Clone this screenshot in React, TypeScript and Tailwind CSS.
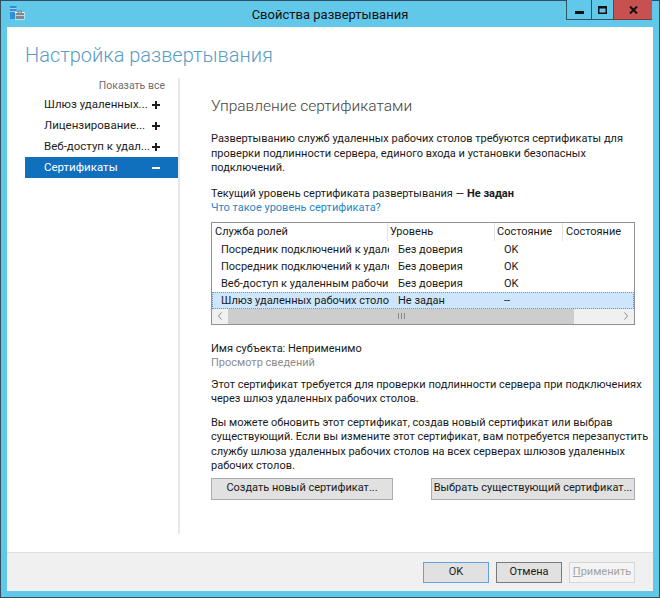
import React from "react";

function AppIcon() {
  return (
    <svg className="absolute left-[8px] top-[4px]" width="16" height="16" viewBox="0 0 16 16">
      <rect x="1" y="1" width="6.5" height="13" fill="#2f8fd8" />
      <rect x="1" y="3" width="6.5" height="1" fill="#9fd3f5" />
      <rect x="1" y="6" width="6.5" height="1" fill="#9fd3f5" />
      <rect x="6" y="7" width="9.5" height="7.5" fill="#ffffff" />
      <rect x="6.5" y="8" width="8.5" height="6" fill="#7c8894" />
      <rect x="9" y="6" width="3.5" height="2" fill="none" stroke="#7c8894" strokeWidth="1" />
      <rect x="6.5" y="10" width="8.5" height="1" fill="#c7ced4" />
    </svg>
  );
}

function Chevron({ dir }: { dir: "l" | "r" }) {
  return (
    <svg width="6" height="8" viewBox="0 0 6 8">
      <polyline
        points={dir === "l" ? "4.5,0.5 1.5,4 4.5,7.5" : "1.5,0.5 4.5,4 1.5,7.5"}
        fill="none"
        stroke="#8a8a8a"
        strokeWidth="1"
      />
    </svg>
  );
}

function NavRow({ label, selected }: { label: string; selected?: boolean }) {
  return (
    <div
      className={
        selected
          ? "flex h-[21px] items-center justify-between bg-[#1170be] pl-[19px] pr-[18px] text-white"
          : "flex h-[21px] items-center justify-between pl-[19px] pr-[18px] text-[#1e1e1e]"
      }
    >
      <span className="whitespace-nowrap text-[11.5px]">{label}</span>
      {selected ? (
        <svg className="shrink-0" width="8" height="8" viewBox="0 0 8 8">
          <rect x="0" y="3" width="8" height="2" fill="#ffffff" />
        </svg>
      ) : (
        <svg className="shrink-0" width="8" height="8" viewBox="0 0 8 8">
          <rect x="0" y="3" width="8" height="2" fill="#1e1e1e" />
          <rect x="3" y="0" width="2" height="8" fill="#1e1e1e" />
        </svg>
      )}
    </div>
  );
}

const rows = [
  ["Посредник подключений к удаленным рабочим столам", "Без доверия", "OK"],
  ["Посредник подключений к удаленным рабочим столам", "Без доверия", "OK"],
  ["Веб-доступ к удаленным рабочим столам", "Без доверия", "OK"],
];

function Row({ cells, selected }: { cells: string[]; selected?: boolean }) {
  return (
    <div
      className={
        selected
          ? "flex h-[17px] items-center border border-dotted border-[#6f8fb8] bg-[#cde6fb]"
          : "flex h-[17px] items-center border border-transparent"
      }
    >
      <div className="w-[176px] shrink-0 overflow-hidden whitespace-nowrap pl-[8px] leading-[15px]">{cells[0]}</div>
      <div className="w-[107px] shrink-0 overflow-hidden whitespace-nowrap pl-[9px] leading-[15px]">{cells[1]}</div>
      <div className="w-[68px] shrink-0 overflow-hidden whitespace-nowrap pl-[8px] leading-[15px]">{cells[2]}</div>
      <div className="flex-1" />
    </div>
  );
}

export default function App() {
  return (
    <div className="relative h-[598px] w-[660px] overflow-hidden bg-[#30505f] p-px font-['Roboto',sans-serif] text-[11px] text-[#1a1a1a]">
      <div className="flex h-full flex-col bg-[#62c8ea]">
        {/* title bar */}
        <div className="relative flex h-[26px] shrink-0 items-center justify-center">
          <AppIcon />
          <span className="text-[13px] leading-none text-[#111111]">Свойства развертывания</span>
        </div>

        {/* client */}
        <div className="mx-[6px] flex min-w-0 flex-1 flex-col bg-white">
          <div className="flex min-w-0 flex-1 flex-col pl-[18px] pt-[13px]">
            <h1 className="h-[30px] text-[20px] font-light leading-[30px] text-[#5a9cc5]">Настройка развертывания</h1>
            <div className="mt-[8px] flex h-[456px] min-w-0">
              <nav className="w-[153px] shrink-0">
                <div className="h-[16px] pr-[13px] text-right text-[10.5px] leading-[16px] text-[#6e6e6e]">Показать все</div>
                <NavRow label="Шлюз удаленных..." />
                <NavRow label="Лицензирование..." />
                <NavRow label="Веб-доступ к удал..." />
                <NavRow label="Сертификаты" selected />
              </nav>
              <div className="w-[2px] shrink-0 bg-[#e8e8e8]" />
              <section className="min-w-0 flex-1 pl-[31px] pr-[18px] pt-[17px]">
                <h2 className="text-[15.5px] font-light leading-[22px] text-[#444444]">Управление сертификатами</h2>
                <p className="mt-[15px] whitespace-nowrap leading-[14.5px]">
                  Развертыванию служб удаленных рабочих столов требуются сертификаты для
                  <br />
                  проверки подлинности сервера, единого входа и установки безопасных
                  <br />
                  подключений.
                </p>
                <div className="mt-[11px] whitespace-nowrap leading-[14.5px]">
                  Текущий уровень сертификата развертывания — <b className="font-bold">Не задан</b>
                </div>
                <div className="leading-[14.5px] text-[#2a86c4]">Что такое уровень сертификата?</div>

                {/* list view */}
                <div className="mt-[6px] overflow-hidden border border-[#8e9196] bg-white">
                  <div className="flex h-[18px] items-center">
                    <div className="h-full w-[176px] shrink-0 border-r border-[#e3e3e3] pl-[3px] leading-[18px]">Служба ролей</div>
                    <div className="h-full w-[107px] shrink-0 border-r border-[#e3e3e3] pl-[2px] leading-[18px]">Уровень</div>
                    <div className="h-full w-[68px] shrink-0 border-r border-[#e3e3e3] pl-[2px] leading-[18px]">Состояние</div>
                    <div className="h-full min-w-0 flex-1 overflow-hidden whitespace-nowrap pl-[3px] leading-[18px]">Состояние</div>
                  </div>
                  {rows.map((r, i) => (
                    <Row key={i} cells={r} />
                  ))}
                  <Row cells={["Шлюз удаленных рабочих столов", "Не задан", "--"]} selected />
                  <div className="flex h-[15px] items-stretch bg-[#f0f0f0]">
                    <div className="flex w-[16px] items-center justify-center">
                      <Chevron dir="l" />
                    </div>
                    <div className="flex w-[346px] items-center justify-center bg-[#cdcdcd]">
                      <svg width="7" height="6" viewBox="0 0 7 6">
                        <rect x="0" y="0" width="1" height="6" fill="#8a8a8a" />
                        <rect x="3" y="0" width="1" height="6" fill="#8a8a8a" />
                        <rect x="6" y="0" width="1" height="6" fill="#8a8a8a" />
                      </svg>
                    </div>
                    <div className="flex-1" />
                    <div className="flex w-[16px] items-center justify-center">
                      <Chevron dir="r" />
                    </div>
                  </div>
                </div>

                <div className="mt-[17px] leading-[14.5px]">Имя субъекта: Неприменимо</div>
                <div className="leading-[14.5px] text-[#8c8c8c]">Просмотр сведений</div>
                <p className="mt-[7px] whitespace-nowrap leading-[14.5px]">
                  Этот сертификат требуется для проверки подлинности сервера при подключениях
                  <br />
                  через шлюз удаленных рабочих столов.
                </p>
                <p className="mt-[9px] whitespace-nowrap leading-[14.5px]">
                  Вы можете обновить этот сертификат, создав новый сертификат или выбрав
                  <br />
                  существующий. Если вы измените этот сертификат, вам потребуется перезапустить
                  <br />
                  службу шлюза удаленных рабочих столов на всех серверах шлюзов удаленных
                  <br />
                  рабочих столов.
                </p>
                <div className="mt-[4px] flex justify-between">
                  <button className="h-[22px] w-[182px] whitespace-nowrap border border-[#adadad] bg-[#e1e1e1] text-[11px] text-[#1a1a1a]">
                    Создать новый сертификат...
                  </button>
                  <button className="h-[22px] w-[204px] whitespace-nowrap border border-[#adadad] bg-[#e1e1e1] text-[11px] text-[#1a1a1a]">
                    Выбрать существующий сертификат...
                  </button>
                </div>
              </section>
            </div>
          </div>

          {/* footer */}
          <div className="flex h-[39px] shrink-0 items-center justify-end gap-[7px] border-t border-[#dfdfdf] bg-[#f0f0f0] pr-[18px]">
            <button className="h-[21px] w-[66px] border border-[#5fa3e6] bg-[#e1e1e1] text-[11px] text-[#1a1a1a]">OK</button>
            <button className="h-[21px] w-[66px] border border-[#7a7a7a] bg-[#e1e1e1] text-[11px] text-[#1a1a1a]">Отмена</button>
            <button className="h-[21px] w-[66px] border border-[#d5d5d5] bg-[#f4f4f4] text-[11px] text-[#a3a3a3]">
              <span className="underline">П</span>рименить
            </button>
          </div>
        </div>
        <div className="h-[6px] shrink-0" />
      </div>

      {/* window controls */}
      <div className="absolute right-[8px] top-0 flex h-[20px]">
        <div className="flex w-[25px] items-center justify-center border-b border-l border-[#2c5566] bg-[#62c8ea]">
          <svg width="9" height="9" viewBox="0 0 9 9">
            <rect x="0" y="6" width="9" height="3" fill="#111" />
          </svg>
        </div>
        <div className="flex w-[22px] items-center justify-center border-b border-l border-[#2c5566] bg-[#62c8ea]">
          <svg width="9" height="8" viewBox="0 0 9 8">
            <rect x="0.75" y="1" width="7.5" height="6.25" fill="none" stroke="#111" strokeWidth="1.5" />
            <rect x="0" y="0" width="9" height="2.5" fill="#111" />
          </svg>
        </div>
        <div className="flex w-[39px] items-center justify-center border-b border-l border-[#7d3a3a] bg-[#c75050]">
          <svg width="9" height="8" viewBox="0 0 9 8">
            <path d="M1 0.5 L8 7.5 M8 0.5 L1 7.5" stroke="#111" strokeWidth="2" />
          </svg>
        </div>
      </div>
    </div>
  );
}
